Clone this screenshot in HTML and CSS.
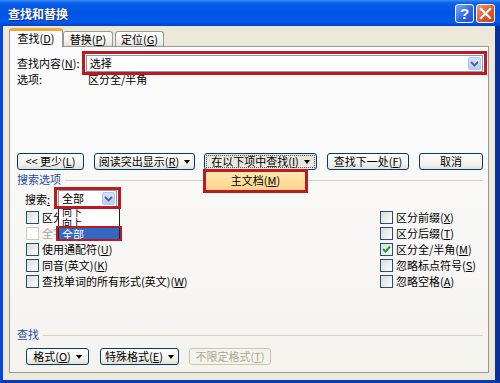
FILE: index.html
```html
<!DOCTYPE html>
<html>
<head>
    <title>查找和替换</title>
    <link rel="stylesheet" href="styles.css">
</head>
<body>
<div class="window">
    <div class="titlebar">
        <span class="title">查找和替换</span>
        <span class="tb-btn help">?</span>
        <span class="tb-btn close">
            <svg width="13" height="13" viewBox="0 0 13 13"><path d="M2 2 L11 11 M11 2 L2 11" stroke="#fff" stroke-width="2.2" stroke-linecap="square"/></svg>
        </span>
    </div>

    <div class="frame">
        <div class="tabs">
            <div class="tab active">查找(<u>D</u>)</div>
            <div class="tab">替换(<u>P</u>)</div>
            <div class="tab third">定位(<u>G</u>)</div>
        </div>

        <div class="panel">
            <div class="find-row">
                <span class="find-label">查找内容(<u>N</u>):</span>
                <div class="combo wide">
                    <span class="combo-text">选择</span>
                    <span class="arrow"><svg width="9" height="6" viewBox="0 0 9 6"><path d="M1 1 L4.5 4.5 L8 1" fill="none" stroke="#4D6185" stroke-width="1.8"/></svg></span>
                </div>
            </div>
            <div class="options-row">
                <span class="options-label">选项:</span>
                <span>区分全/半角</span>
            </div>

            <div class="button-row">
                <div class="btn w-less">&lt;&lt; 更少(<u>L</u>)</div>
                <div class="btn w-read">阅读突出显示(<u>R</u>)<span class="caret"></span></div>
                <div class="btn w-in pressed">在以下项中查找(<u>I</u>)<span class="caret"></span></div>
                <div class="btn w-next">查找下一处(<u>F</u>)</div>
                <div class="btn w-cancel">取消</div>
            </div>

            <div class="section">搜索选项</div>

            <div class="search-row">
                <span class="search-label">搜索<u>:</u></span>
                <div class="combo small">
                    <span class="combo-text">全部</span>
                    <span class="arrow"><svg width="9" height="6" viewBox="0 0 9 6"><path d="M1 1 L4.5 4.5 L8 1" fill="none" stroke="#4D6185" stroke-width="1.8"/></svg></span>
                </div>
            </div>

            <div class="checks">
                <div class="check-col left">
                    <div class="check"><span class="box"></span>区分大小写(<u>H</u>)</div>
                    <div class="check disabled"><span class="box"></span>全字匹配(<u>Y</u>)</div>
                    <div class="check"><span class="box"></span>使用通配符(<u>U</u>)</div>
                    <div class="check"><span class="box"></span>同音(英文)(<u>K</u>)</div>
                    <div class="check"><span class="box"></span>查找单词的所有形式(英文)(<u>W</u>)</div>
                </div>
                <div class="check-col">
                    <div class="check"><span class="box"></span>区分前缀(<u>X</u>)</div>
                    <div class="check"><span class="box"></span>区分后缀(<u>T</u>)</div>
                    <div class="check"><span class="box checked"><svg width="9" height="9" viewBox="0 0 9 9"><path d="M1 4 L3.5 6.5 L8 1.5" fill="none" stroke="#21A121" stroke-width="2"/></svg></span>区分全/半角(<u>M</u>)</div>
                    <div class="check"><span class="box"></span>忽略标点符号(<u>S</u>)</div>
                    <div class="check"><span class="box"></span>忽略空格(<u>A</u>)</div>
                </div>
            </div>

            <div class="section bottom">查找</div>

            <div class="format-row">
                <div class="btn w-format">格式(<u>O</u>)<span class="caret"></span></div>
                <div class="btn w-special">特殊格式(<u>E</u>)<span class="caret"></span></div>
                <div class="btn w-none disabled">不限定格式(<u>T</u>)</div>
            </div>

            <!-- open menus and highlight marks lying over the dialog -->
            <div class="popup">主文档(<u>M</u>)</div>
            <div class="list">
                <div class="item">向下</div>
                <div class="item">向上</div>
                <div class="item selected">全部</div>
            </div>
            <div class="mark mark-find"></div>
            <div class="mark mark-search"></div>
            <div class="mark mark-selected"></div>
        </div>
    </div>
</div>
</body>
</html>
```

FILE: styles.css
```css
/* Page */
body {
    margin: 0;
    font-family: "Noto Sans CJK SC", "Liberation Sans", sans-serif;
    font-size: 11px;
    color: #000;
    overflow: hidden;
}

u {
    text-decoration: underline;
    text-underline-offset: 1px;
}

/* Dialog window */
.window {
    width: 500px;
    height: 383px;
    display: flex;
    flex-direction: column;
    background-color: #ECE9D8;
}

.titlebar {
    height: 26px;
    flex: none;
    display: flex;
    align-items: center;
    padding: 0 5px 0 8px;
    background: linear-gradient(#3C8CF8 0, #0A5FEA 12%, #0055E5 45%, #0059EC 85%, #0040C8 100%);
}

.title {
    flex: 1;
    color: #fff;
    font-weight: bold;
    font-size: 12px;
    text-shadow: 1px 1px #0A2A90;
}

.tb-btn {
    width: 19px;
    height: 19px;
    box-sizing: border-box;
    border: 1px solid #fff;
    border-radius: 3px;
    display: flex;
    align-items: center;
    justify-content: center;
    margin-left: 2px;
}

.help {
    background: linear-gradient(135deg, #7FAAF8, #2A64E6 60%, #1E52D6);
    color: #fff;
    font-family: "Liberation Sans", sans-serif;
    font-weight: bold;
    font-size: 15px;
}

.close {
    background: linear-gradient(135deg, #F09A7A, #E0582E 55%, #C6401C);
}

.frame {
    flex: 1;
    border-left: 3px solid #0845D8;
    border-right: 5px solid #0A2F9E;
    border-bottom: 3px solid #0A3AB4;
    padding: 2px 6px 0 6px;
}

/* Tabs */
.tabs {
    display: flex;
    align-items: flex-end;
    height: 19px;
    margin-bottom: -1px;
    position: relative;
    z-index: 1;
}

.tab {
    width: 50px;
    height: 15px;
    margin-bottom: 1px;
    box-sizing: border-box;
    border: 1px solid #919B9C;
    border-bottom: none;
    border-radius: 3px 3px 0 0;
    background: linear-gradient(#FFFFFF, #F0EFEA 70%, #E3E1D8);
    text-align: center;
    line-height: 14px;
}

.tab.active {
    width: 54px;
    height: 19px;
    margin-bottom: 0;
    border-top: 3px solid #F3A93A;
    background: #FCFCFE;
    line-height: 15px;
}

.tab.third {
    width: 49px;
    margin-left: 2px;
}

/* Tab page */
.panel {
    position: relative;
    height: 327px;
    box-sizing: border-box;
    border: 1px solid #919B9C;
    background: linear-gradient(#FCFCFE, #F4F3EE);
    padding: 8px 5px 0 7px;
}

.find-row {
    display: flex;
    height: 17px;
    line-height: 17px;
}

.find-label {
    width: 69px;
}

.combo {
    height: 17px;
    box-sizing: border-box;
    border: 1px solid #7F9DB9;
    background-color: #fff;
    display: flex;
    align-items: center;
}

.combo-text {
    flex: 1;
    padding-left: 3px;
    line-height: 15px;
}

.combo.wide {
    width: 398px;
}

.combo.small {
    width: 59px;
}

.arrow {
    width: 13px;
    height: 13px;
    margin-right: 1px;
    box-sizing: border-box;
    border: 1px solid #B3C6F2;
    border-radius: 2px;
    background: linear-gradient(#D6E2FD, #B9CDFB);
    display: flex;
    align-items: center;
    justify-content: center;
}

.options-row {
    display: flex;
    height: 14px;
    line-height: 14px;
}

.options-label {
    width: 71px;
}

/* Buttons */
.button-row {
    display: flex;
    margin-top: 67px;
}

.btn {
    height: 17px;
    box-sizing: border-box;
    border: 1px solid #003C74;
    border-radius: 3px;
    background: linear-gradient(#FFFFFF, #F4F3EE 60%, #E3E0D6);
    display: flex;
    align-items: center;
    justify-content: center;
    line-height: 15px;
}

.btn.pressed {
    background: linear-gradient(#E6E4DA, #EDEBE2);
    outline: 1px dotted #555;
    outline-offset: -3px;
}

.btn.disabled {
    border-color: #C9C7BA;
    background: #F5F4EA;
    color: #ACA899;
}

.caret {
    width: 0;
    height: 0;
    margin-left: 5px;
    border-top: 4px solid #000;
    border-left: 3px solid transparent;
    border-right: 3px solid transparent;
}

.w-less { width: 67px; }
.w-read { width: 101px; margin-left: 10px; }
.w-in { width: 113px; margin-left: 9px; }
.w-next { width: 82px; margin-left: 10px; }
.w-cancel { width: 64px; margin-left: 10px; }

.w-format { width: 63px; }
.w-special { width: 79px; margin-left: 11px; }
.w-none { width: 82px; margin-left: 10px; }

/* Group headings */
.section {
    display: flex;
    align-items: center;
    height: 14px;
    line-height: 14px;
    margin-top: 2px;
    width: 466px;
    color: #1E4BA0;
}

.section::after {
    content: "";
    flex: 1;
    margin: 2px 0 0 4px;
    border-top: 1px solid #D5D2C2;
}

.section.bottom {
    margin-top: 38px;
}

.search-row {
    display: flex;
    align-items: center;
    margin-top: 4px;
    padding-left: 8px;
}

.search-label {
    width: 33px;
}

/* Checkboxes */
.checks {
    display: flex;
    margin-top: 2px;
    padding-left: 9px;
}

.check-col.left {
    width: 354px;
}

.check {
    height: 16px;
    display: flex;
    align-items: center;
    white-space: nowrap;
}

.box {
    width: 13px;
    height: 13px;
    margin-right: 3px;
    box-sizing: border-box;
    border: 1px solid #1C5180;
    background: linear-gradient(135deg, #DCDBD5, #FFFFFF);
    display: flex;
    align-items: center;
    justify-content: center;
}

.check.disabled {
    color: #ACA899;
}

.check.disabled .box {
    border-color: #CAC8BB;
    background: #fff;
}

.format-row {
    display: flex;
    margin-top: 7px;
    padding-left: 9px;
}

/* Open menu and drop-down list */
.popup {
    position: absolute;
    left: 193px;
    top: 122px;
    width: 105px;
    height: 24px;
    box-sizing: border-box;
    border: 3px solid #BC1A20;
    background: linear-gradient(#FEE6AE, #FBD58A);
    text-align: center;
    line-height: 17px;
}

.list {
    position: absolute;
    left: 48px;
    top: 159px;
    width: 62px;
    height: 34px;
    box-sizing: border-box;
    border: 1px solid #222;
    border-top: none;
    background-color: #fff;
}

.item {
    height: 11px;
    font-size: 10px;
    line-height: 11px;
    padding-left: 3px;
}

.item.selected {
    height: 12px;
    font-size: 11px;
    line-height: 12px;
    background-color: #316AC5;
    color: #fff;
}

/* Red highlight boxes */
.mark {
    position: absolute;
    box-sizing: border-box;
    border: 3px solid #BC1A20;
}

.mark-find {
    left: 72px;
    top: 4px;
    width: 405px;
    height: 24px;
}

.mark-search {
    left: 44px;
    top: 140px;
    width: 67px;
    height: 22px;
}

.mark-selected {
    left: 46px;
    top: 179px;
    width: 66px;
    height: 15px;
    border-width: 2px;
}
```
